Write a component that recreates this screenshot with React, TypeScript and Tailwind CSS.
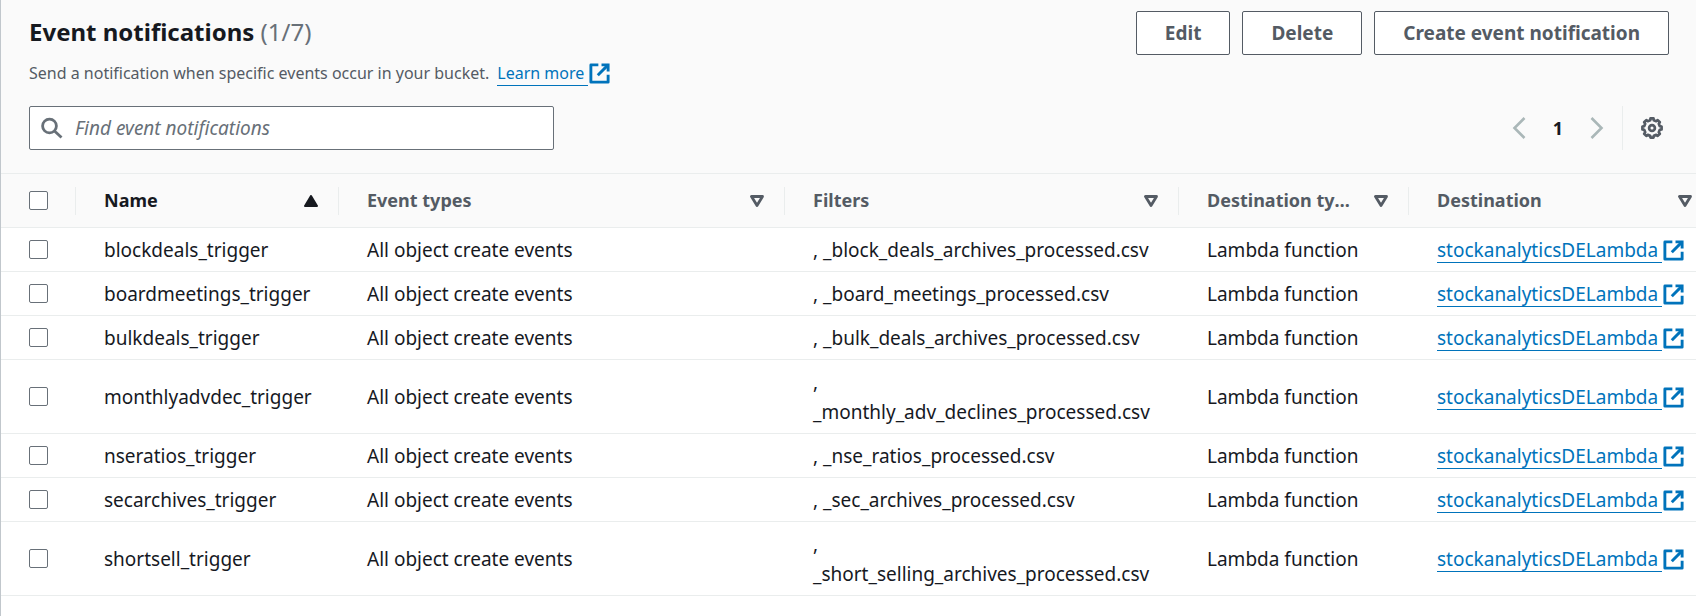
import React from "react";

type Notification = { name: string; filter: string };

const notifications: Notification[] = [
  { name: "blockdeals_trigger", filter: "_block_deals_archives_processed.csv" },
  { name: "boardmeetings_trigger", filter: "_board_meetings_processed.csv" },
  { name: "bulkdeals_trigger", filter: "_bulk_deals_archives_processed.csv" },
  { name: "monthlyadvdec_trigger", filter: "_monthly_adv_declines_processed.csv" },
  { name: "nseratios_trigger", filter: "_nse_ratios_processed.csv" },
  { name: "secarchives_trigger", filter: "_sec_archives_processed.csv" },
  { name: "shortsell_trigger", filter: "_short_selling_archives_processed.csv" },
];

const columns = [
  { label: "Name", width: "w-[263px]", sorted: true },
  { label: "Event types", width: "w-[446px]", sorted: false },
  { label: "Filters", width: "w-[394px]", sorted: false },
  { label: "Destination type", width: "w-[230px]", sorted: false },
  { label: "Destination", width: "w-[304px]", sorted: false },
];

// Outline of an eight-toothed gear centred in a 24-unit box.
const gearPoints = Array.from({ length: 32 }, (_, i) => {
  const tooth = Math.floor(i / 4);
  const [offset, radius] = [[-13, 8], [-9, 9.7], [9, 9.7], [13, 8]][i % 4];
  const angle = ((tooth * 45 + offset) * Math.PI) / 180;
  return `${12 + radius * Math.sin(angle)},${12 - radius * Math.cos(angle)}`;
}).join(" ");

function ExternalIcon() {
  return (
    <svg viewBox="0 0 16 16" className="size-[23px] shrink-0" fill="none" stroke="currentColor" strokeWidth="2" aria-hidden="true">
      <path d="M14 8.800V14H2V2h5.200" strokeLinejoin="round" />
      <path d="M9.400 2H14v4.600" />
      <path d="M6.800 9.200 14 2" />
    </svg>
  );
}

function ExternalLink({ children }: { children: string }) {
  return (
    <a href="#" className="inline-flex items-center text-[#0073bb]">
      <span className="border-b border-[#0073bb] pr-1 leading-6">{children}</span>
      <ExternalIcon />
    </a>
  );
}

function SortIcon({ sorted }: { sorted: boolean }) {
  return (
    <svg viewBox="0 0 14 12" className="h-3 w-3.5 shrink-0" aria-hidden="true">
      {sorted ? (
        <path d="M7 1 13 11H1Z" fill="currentColor" stroke="currentColor" strokeWidth="2" strokeLinejoin="round" />
      ) : (
        <path d="M1.500 1.500H12.500L7 10.500Z" fill="none" stroke="currentColor" strokeWidth="2.800" strokeLinejoin="round" />
      )}
    </svg>
  );
}

function Checkbox({ label }: { label: string }) {
  return (
    <input
      type="checkbox"
      aria-label={label}
      className="block size-[19px] appearance-none rounded-[2px] border border-[#687078] bg-white checked:bg-[#0073bb]"
    />
  );
}

function Button({ children }: { children: string }) {
  return (
    <button type="button" className="h-11 rounded-[2px] border border-[#545b64] bg-white px-7 text-[19px] font-bold text-[#545b64]">
      {children}
    </button>
  );
}

export default function App() {
  return (
    <main className="min-h-screen overflow-hidden border-l border-[#c1c7cc] bg-white font-['Noto_Sans','Open_Sans',sans-serif] text-[19px] text-[#16191f]">
      <header className="bg-[#fafafa] pt-[11px] pr-[27px] pb-[23px] pl-7">
        <div className="flex items-start justify-between">
          <div>
            <h1 className="text-2xl leading-[42px] font-bold">
              Event notifications <span className="font-normal text-[#687078]">(1/7)</span>
            </h1>
            <p className="flex items-center gap-2 text-base leading-10 text-[#545b64]">
              Send a notification when specific events occur in your bucket. <ExternalLink>Learn more</ExternalLink>
            </p>
          </div>
          <div className="flex gap-3">
            <Button>Edit</Button>
            <Button>Delete</Button>
            <Button>Create event notification</Button>
          </div>
        </div>
        <div className="mt-[13px] flex items-center justify-between">
          <label className="flex h-11 w-[525px] items-center gap-3 rounded-[2px] border border-[#687078] bg-white px-[11px]">
            <svg viewBox="0 0 22 22" className="size-[22px] shrink-0 text-[#687078]" fill="none" stroke="currentColor" strokeWidth="2.800" aria-hidden="true">
              <circle cx="8.500" cy="9" r="6.900" />
              <path d="m13.500 14 7 6.500" />
            </svg>
            <input
              type="search"
              aria-label="Find event notifications"
              placeholder="Find event notifications"
              className="min-w-0 flex-1 bg-transparent outline-none placeholder:text-[#687078] placeholder:italic"
            />
          </label>
          <div className="flex items-center">
            <button type="button" aria-label="Previous page" className="text-[#aab7b8]">
              <svg viewBox="0 0 14 22" className="h-[22px] w-3.5" fill="none" stroke="currentColor" strokeWidth="2.600" aria-hidden="true">
                <path d="M12.500 1 2.500 11l10 10" />
              </svg>
            </button>
            <button type="button" className="w-16 text-lg font-bold">1</button>
            <button type="button" aria-label="Next page" className="text-[#aab7b8]">
              <svg viewBox="0 0 14 22" className="h-[22px] w-3.5" fill="none" stroke="currentColor" strokeWidth="2.600" aria-hidden="true">
                <path d="m1.500 1 10 10-10 10" />
              </svg>
            </button>
            <div className="ml-[18px] h-11 w-px bg-[#eaeded]" />
            <button type="button" aria-label="Preferences" className="mr-[5px] ml-[17px] text-[#545b64]">
              <svg viewBox="0 0 24 24" className="size-6" fill="none" stroke="currentColor" strokeWidth="2.700" strokeLinejoin="round" aria-hidden="true">
                <polygon points={gearPoints} />
                <circle cx="12" cy="12" r="2.900" />
              </svg>
            </button>
          </div>
        </div>
      </header>
      <table className="w-full min-w-[1712px] table-fixed border-collapse text-left">
        <thead className="bg-[#fafafa] text-lg">
          <tr className="h-[54px] border-y border-[#eaeded]">
            <th className="w-[75px] p-0">
              <div className="flex h-7 items-center border-r border-[#eaeded] pl-7">
                <Checkbox label="Select all" />
              </div>
            </th>
            {columns.map((c) => (
              <th key={c.label} className={`${c.width} p-0`} aria-sort={c.sorted ? "ascending" : "none"}>
                <div className={`flex h-7 items-center border-r border-[#eaeded] pr-5 pl-7 ${c.sorted ? "" : "text-[#545b64]"}`}>
                  <span className="mr-[18px] min-w-0 flex-1 truncate pb-0.5 leading-[26px]">{c.label}</span>
                  <SortIcon sorted={c.sorted} />
                </div>
              </th>
            ))}
          </tr>
        </thead>
        <tbody>
          {notifications.map((n) => (
            <tr key={n.name} className="border-b border-[#eaeded] leading-[30px]">
              <td className="py-0 pl-7">
                <Checkbox label={`Select ${n.name}`} />
              </td>
              <td className="pt-[7px] pb-1.5 pl-7">{n.name}</td>
              <td className="pt-[7px] pb-1.5 pl-7">All object create events</td>
              <td className="pt-[7px] pr-6 pb-1.5 pl-7">, {n.filter}</td>
              <td className="pt-[7px] pb-1.5 pl-7">Lambda function</td>
              <td className="pl-7">
                <ExternalLink>stockanalyticsDELambda</ExternalLink>
              </td>
            </tr>
          ))}
        </tbody>
      </table>
    </main>
  );
}
